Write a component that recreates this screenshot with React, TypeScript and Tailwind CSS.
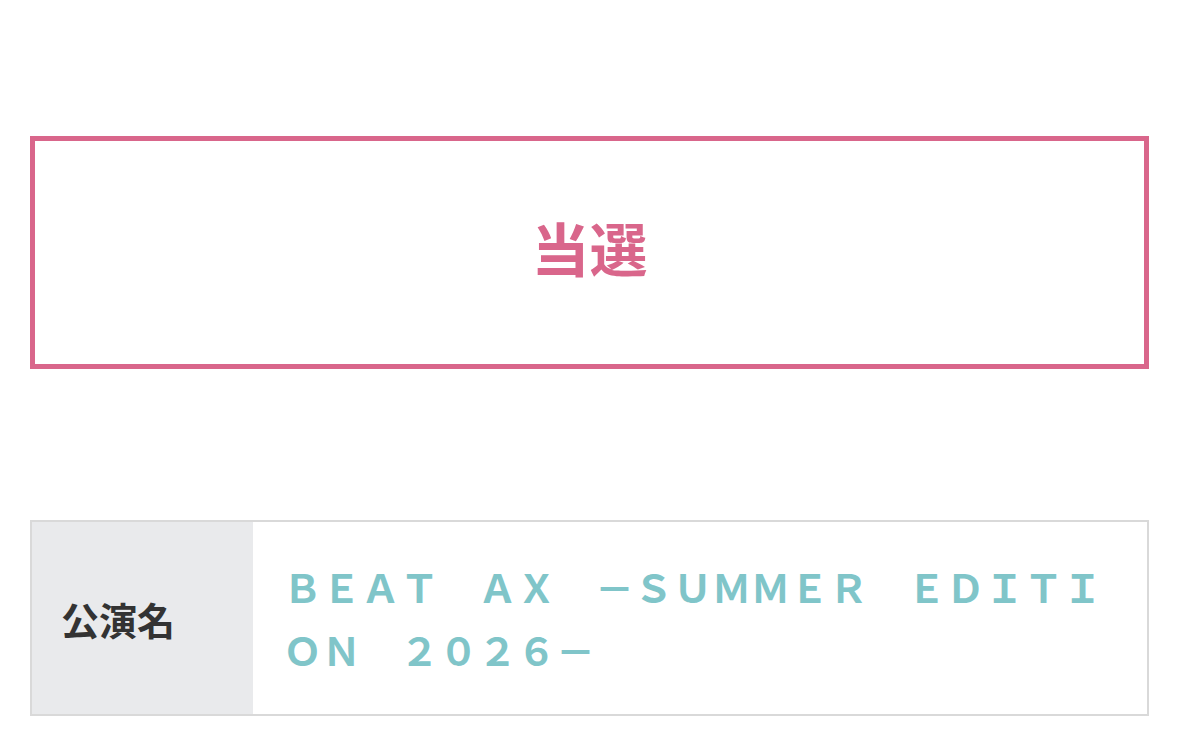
export default function App() {
  return (
    <div className="min-h-screen bg-white px-[30px] pt-[136px] font-['Noto_Sans_CJK_JP',sans-serif]">
      {/* 抽選結果 */}
      <div className="flex h-[233px] items-center justify-center border-[5px] border-[#d9668b] pb-3">
        <span className="text-[58px] font-bold leading-none text-[#d9668b]">当選</span>
      </div>

      {/* 公演情報 */}
      <table className="mt-[151px] w-full border-collapse border-2 border-[#d9d9d9]">
        <tbody>
          <tr>
            <th className="w-[222px] bg-[#e9eaec] pl-[29px] text-left align-middle text-[38px] font-bold text-[#333333]">
              公演名
            </th>
            <td className="py-[33px] pl-[30px] pr-[30px] text-[39px] font-bold leading-[63px] text-[#80c5c9]">
              ＢＥＡＴ　ＡＸ　－ＳＵＭＭＥＲ　ＥＤＩＴＩＯＮ　２０２６－
            </td>
          </tr>
        </tbody>
      </table>
    </div>
  );
}
